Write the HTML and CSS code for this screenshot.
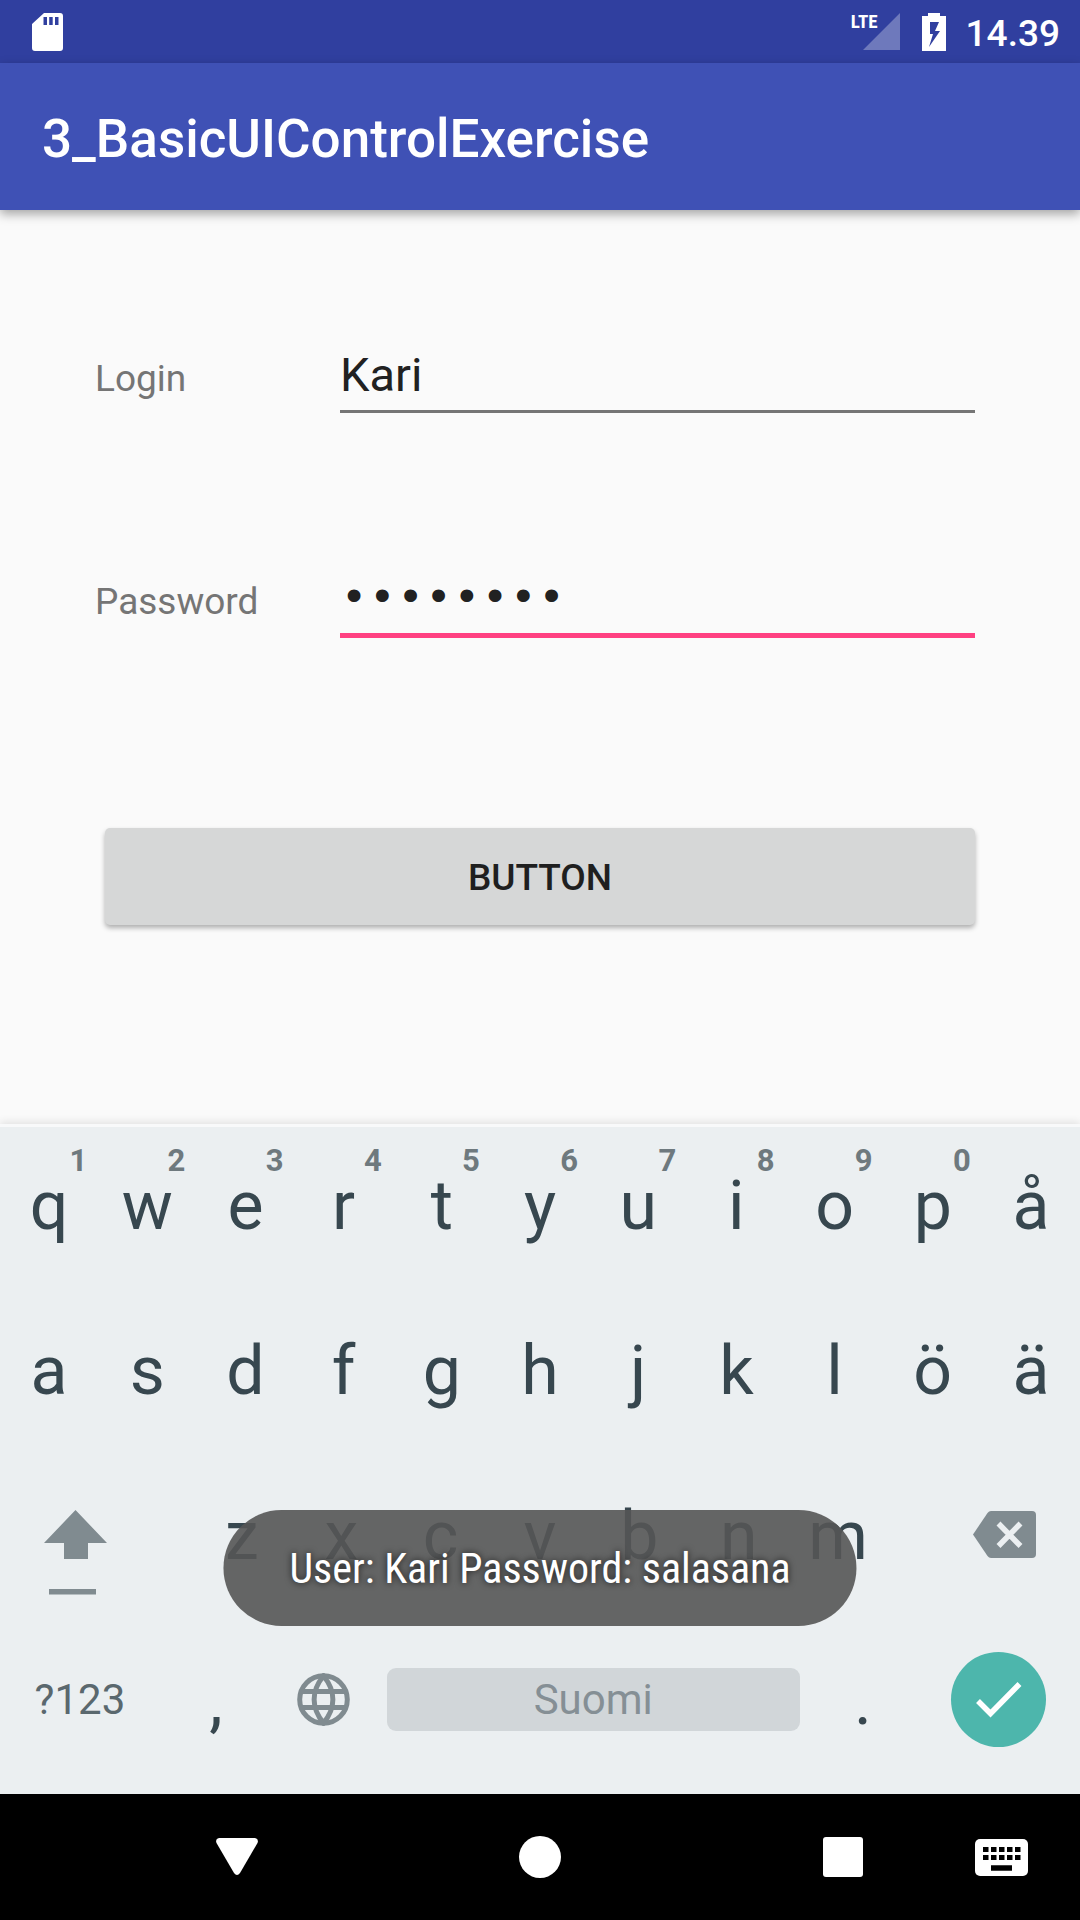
FILE: index.html
```html
<!DOCTYPE html>
<html lang="fi">
<head>
<meta charset="utf-8">
<meta name="viewport" content="width=device-width, initial-scale=1">
<title>3_BasicUIControlExercise</title>
<link rel="stylesheet" href="styles.css">
</head>
<body>
<div class="statusbar">
  <svg class="icon-sd" viewBox="0 0 32 38" aria-hidden="true"><path fill="#fff" fill-rule="evenodd" d="M12 0H28Q31 0 31 3V35Q31 38 28 38H3Q0 38 0 35V11ZM11.500 4V12H15V4ZM17.200 4V12H20.700V4ZM23 4V12H26.500V4Z"/></svg>
  <div class="status-right">
    <span class="signal"><span class="signal-label">LTE</span><svg class="icon-signal" viewBox="0 0 37 37" aria-hidden="true"><path fill="#fff" fill-opacity=".3" d="M37 0V37H0Z"/></svg></span>
    <svg class="icon-battery" viewBox="0 0 24 38" aria-hidden="true"><path fill="#fff" fill-rule="evenodd" d="M6 0H18V3H24V38H0V3H6ZM8 9V21H11L7 34L18 18H13L17 9Z"/></svg>
    <span class="clock">14.39</span>
  </div>
</div>
<header class="appbar"><h1 class="title">3_BasicUIControlExercise</h1></header>
<main class="content">
  <form class="form">
    <label class="label" for="login">Login</label>
    <input class="field" id="login" type="text" value="Kari">
    <label class="label" for="password">Password</label>
    <input class="field field-active" id="password" type="password" value="salasana">
    <button class="submit" type="button">BUTTON</button>
  </form>
</main>
<section class="keyboard" aria-label="Keyboard">
  <div class="row row-letters">
    <button class="key">q<span class="hint">1</span></button><button class="key">w<span class="hint">2</span></button><button class="key">e<span class="hint">3</span></button><button class="key">r<span class="hint">4</span></button><button class="key">t<span class="hint">5</span></button><button class="key">y<span class="hint">6</span></button><button class="key">u<span class="hint">7</span></button><button class="key">i<span class="hint">8</span></button><button class="key">o<span class="hint">9</span></button><button class="key">p<span class="hint">0</span></button><button class="key">å</button>
  </div>
  <div class="row row-letters">
    <button class="key">a</button><button class="key">s</button><button class="key">d</button><button class="key">f</button><button class="key">g</button><button class="key">h</button><button class="key">j</button><button class="key">k</button><button class="key">l</button><button class="key">ö</button><button class="key">ä</button>
  </div>
  <div class="row row-shift">
    <button class="key key-shift" aria-label="Shift"><svg class="icon-shift" viewBox="0 0 64 86" aria-hidden="true"><path fill="#808b90" d="M31.500 0L63 33H44V49H20V33H0ZM5 79H52V84.500H5Z"/></svg></button>
    <button class="key">z</button><button class="key">x</button><button class="key">c</button><button class="key">v</button><button class="key">b</button><button class="key">n</button><button class="key">m</button>
    <button class="key key-delete" aria-label="Delete"><svg class="icon-delete" viewBox="0 0 63 47" aria-hidden="true"><path fill="#808b90" d="M18 0H59Q63 0 63 4V43Q63 47 59 47H18Q16 47 14.500 45L0 23.500L14.500 2Q16 0 18 0Z"/><path stroke="#ebeff1" stroke-width="5.500" d="M25.500 12.500L47.500 35M47.500 12.500L25.500 35"/></svg></button>
  </div>
  <div class="row row-bottom">
    <button class="key key-symbols">?123</button>
    <button class="key">,</button>
    <button class="key key-icon" aria-label="Language"><svg class="icon-globe" viewBox="0 0 53 53" fill="none" stroke="#808b90" stroke-width="5" aria-hidden="true"><circle cx="26.500" cy="26.500" r="23.800"/><path d="M4 18.500H49M4 34.500H49M26.500 3C14 18 14 35 26.500 50C39 35 39 18 26.500 3Z"/></svg></button>
    <button class="key key-space"><span class="space">Suomi</span></button>
    <button class="key">.</button>
    <button class="key key-icon key-done" aria-label="Done"><span class="done"><svg class="icon-check" viewBox="0 0 46 36" aria-hidden="true"><path fill="none" stroke="#fff" stroke-width="5.500" d="M2 19L14.500 31.500L43.500 2"/></svg></span></button>
  </div>
</section>
<nav class="navbar">
  <button class="nav nav-back" aria-label="Back"><svg class="icon-nav" viewBox="0 0 42 42" aria-hidden="true"><path fill="#fff" d="M3 2H39Q43 3 41.500 7L24 37Q21 41 18 37L.5 7Q-1 3 3 2Z"/></svg></button>
  <button class="nav nav-home" aria-label="Home"><svg class="icon-nav" viewBox="0 0 42 42" aria-hidden="true"><circle cx="21" cy="21" r="21" fill="#fff"/></svg></button>
  <button class="nav nav-recent" aria-label="Recent apps"><svg class="icon-nav" viewBox="0 0 42 42" aria-hidden="true"><rect x="1" y="1" width="40" height="40" rx="3" fill="#fff"/></svg></button>
  <button class="nav nav-ime" aria-label="Choose keyboard"><svg class="icon-ime" viewBox="0 0 53 37" aria-hidden="true"><rect width="53" height="37" rx="5" fill="#fff"/><path stroke="#000" stroke-width="5" stroke-dasharray="5.500 2.500" d="M8 10.500H45.500M8 18.500H45.500"/><path stroke="#000" stroke-width="5.500" d="M16 29H37"/></svg></button>
</nav>
<div class="toast" role="status">User: Kari Password: salasana</div>
</body>
</html>
```
FILE: styles.css
```css
* { box-sizing: border-box; }
body {
  margin: 0;
  min-height: 100vh;
  display: flex;
  flex-direction: column;
  position: relative;
  background: #fafafa;
  font-family: Roboto, sans-serif;
}
button, input { font-family: inherit; }
button { border: 0; padding: 0; background: none; }
svg { display: block; }

.statusbar {
  height: 63px;
  padding: 0 20px 0 32px;
  display: flex;
  align-items: center;
  justify-content: space-between;
  background: #303f9f;
}
.icon-sd { width: 32px; height: 38px; }
.status-right { display: flex; align-items: center; }
.signal { position: relative; margin-right: 22px; }
.signal-label {
  position: absolute;
  right: 22px;
  top: 0;
  color: #fff;
  font: 700 19px/18px "Roboto Condensed", "Liberation Sans Narrow", Roboto, sans-serif;
}
.icon-signal { width: 37px; height: 37px; }
.icon-battery { width: 24px; height: 38px; margin-right: 20px; }
.clock { color: #fff; font-size: 37px; font-weight: 500; line-height: 63px; padding-top: 4px; }

.appbar {
  height: 147px;
  padding: 0 42px;
  display: flex;
  align-items: center;
  background: #3f51b5;
  box-shadow: 0 4px 10px rgba(0, 0, 0, .35);
}
.title { margin: 0; padding-top: 4px; color: #fff; font-size: 53px; font-weight: 500; line-height: 64px; }

.content { flex: 1; padding: 137px 105px 0 95px; }
.form {
  display: grid;
  grid-template-columns: 245px 1fr;
  align-items: start;
}
.label { color: #757575; font-size: 37px; line-height: 64px; }
.field {
  width: 100%;
  margin: 0 0 157px;
  padding: 0 0 8px;
  height: 66px;
  border: 0;
  border-bottom: 3px solid #757575;
  outline: 0;
  background: none;
  color: #212121;
  font-size: 47px;
  line-height: 55px;
}
.field-active {
  height: 68px;
  margin-bottom: 190px;
  padding-bottom: 6px;
  border-bottom: 5px solid #ff4081;
  font-family: "Liberation Mono", monospace;
}
.submit {
  grid-column: 1 / -1;
  height: 97px;
  margin-left: 10px;
  padding-top: 2px;
  border-radius: 5px;
  background: #d6d7d7;
  box-shadow: 0 3px 5px rgba(0, 0, 0, .3);
  color: #1f1f1f;
  font-size: 37px;
  font-weight: 500;
}

.keyboard {
  border-top: 3px solid #f8f9fa;
  padding-top: 7px;
  background: #ebeff1;
  box-shadow: 0 -2px 8px rgba(0, 0, 0, .1);
}
.row { display: grid; height: 165px; }
.row-letters { grid-template-columns: repeat(11, 1fr); }
.row-shift { grid-template-columns: 1fr repeat(7, 9.2%) 1fr; }
.row-bottom { grid-template-columns: 14.8% 10.4% 9.6% 39.8% 10.6% 1fr; }
.key {
  position: relative;
  display: flex;
  align-items: center;
  justify-content: center;
  padding-bottom: 22px;
  color: #37474f;
  font-size: 68px;
  line-height: 80px;
}
.hint {
  position: absolute;
  top: 9px;
  right: 11px;
  color: #6e797e;
  font-size: 31px;
  font-weight: 700;
  line-height: 36px;
}
.key-shift { padding: 46px 41px 0 0; align-items: flex-start; }
.key-delete { padding: 47px 0 0 41px; align-items: flex-start; }
.icon-shift { width: 64px; height: 86px; }
.icon-delete { width: 63px; height: 47px; }
.key-symbols { padding-bottom: 24px; color: #5a686e; font-size: 42px; }
.key-icon { padding-bottom: 24px; }
.key-done { padding-right: 3px; }
.icon-globe { width: 53px; height: 53px; }
.key-space { padding: 0 6px 24px 11px; color: #858f95; font-size: 42px; }
.space { flex: 1; border-radius: 9px; background: #d1d6d9; line-height: 63px; }
.done {
  width: 95px;
  height: 95px;
  border-radius: 50%;
  display: grid;
  place-items: center;
  background: #4db6ac;
}
.icon-check { width: 46px; height: 36px; }

.navbar {
  display: grid;
  grid-template-columns: 14.6% 14.6% 1fr 14.6% 1fr 14.6% 14.6%;
  height: 126px;
  background: #000;
}
.nav { display: grid; place-items: center; }
.nav-back { grid-column: 2; }
.nav-home { grid-column: 4; }
.nav-recent { grid-column: 6; }
.nav-ime { grid-column: 7; }
.icon-nav { width: 42px; height: 42px; }
.icon-ime { width: 53px; height: 37px; }

.toast {
  position: absolute;
  left: 50%;
  bottom: 294px;
  transform: translateX(-50%);
  padding: 2px 66px 0;
  border-radius: 58px;
  background: rgba(85, 85, 85, .9);
  color: #fff;
  font: 42px/114px "Roboto Condensed", "Liberation Sans Narrow", Roboto, sans-serif;
  white-space: nowrap;
  text-shadow: 0 0 7px rgba(0, 0, 0, .75);
}
```
